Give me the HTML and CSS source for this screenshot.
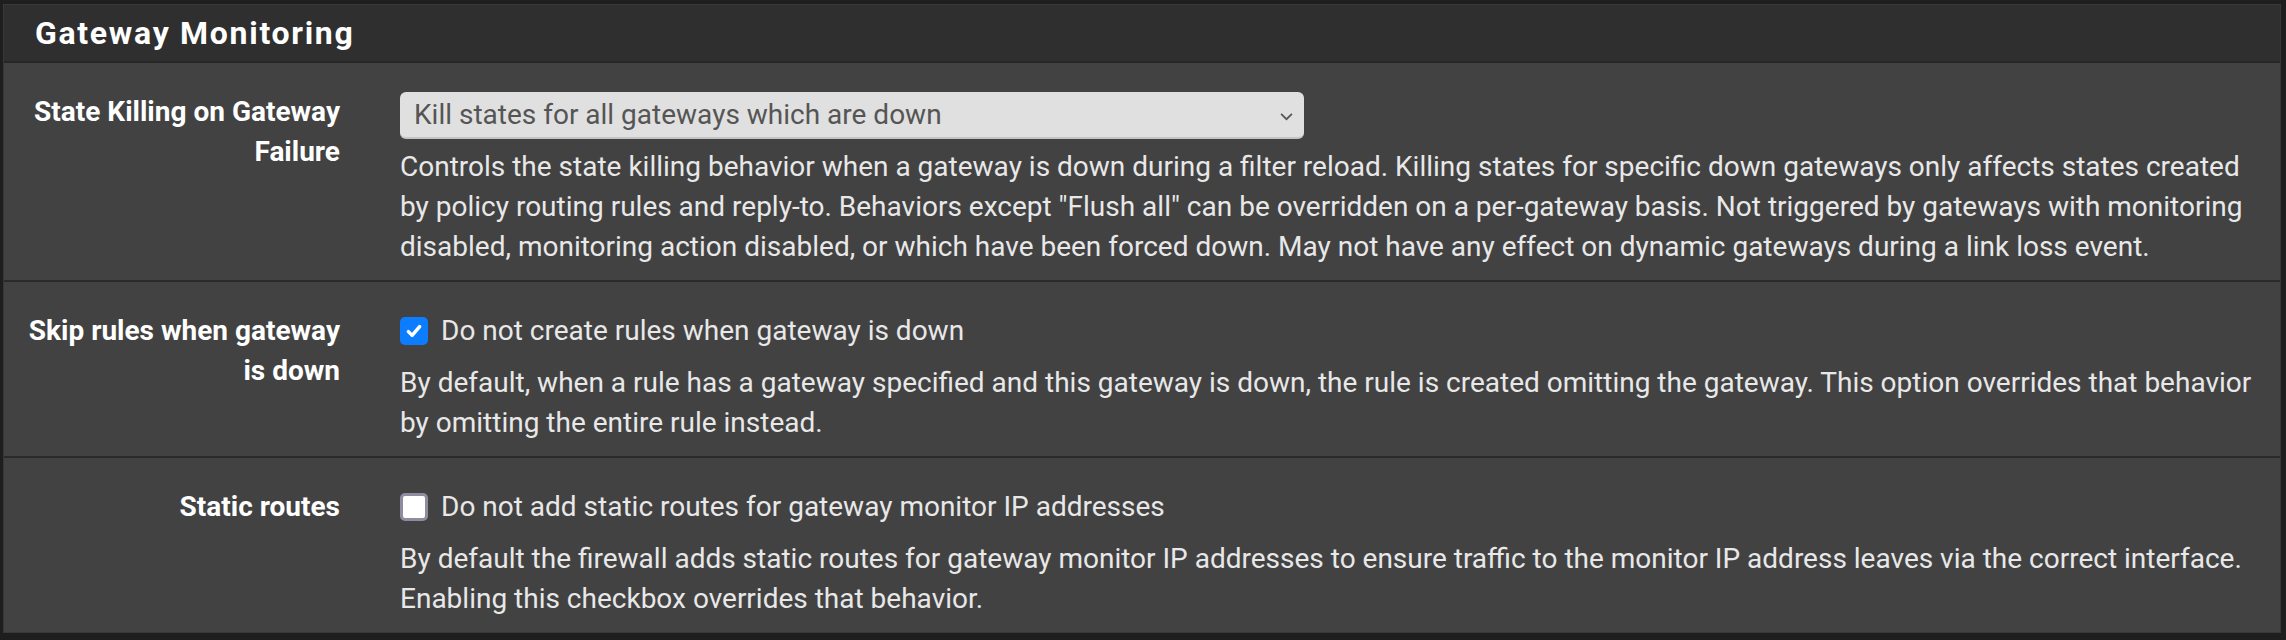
FILE: index.html
```html
<!DOCTYPE html>
<html lang="en">
<head>
  <meta charset="UTF-8">
  <title>Gateway Monitoring</title>
  <link rel="stylesheet" href="styles.css">
</head>
<body>
  <div class="panel">
    <div class="panel-heading">
      <h2 class="panel-title">Gateway Monitoring</h2>
    </div>
    <div class="panel-body">

      <div class="form-group">
        <label class="control-label" for="killStates">State Killing on Gateway Failure</label>
        <div class="control">
          <div class="select-wrap">
            <select id="killStates" class="form-select">
              <option>Kill states for all gateways which are down</option>
            </select>
            <svg class="chevron" viewBox="0 0 12 8" width="13" height="9"><path d="M1 1.5l5 5 5-5" fill="none" stroke="#555" stroke-width="1.6"/></svg>
          </div>
          <p class="help-block">Controls the state killing behavior when a gateway is down during a filter reload. Killing states for specific down gateways only affects states created by policy routing rules and reply-to. Behaviors except "Flush all" can be overridden on a per-gateway basis. Not triggered by gateways with monitoring disabled, monitoring action disabled, or which have been forced down. May not have any effect on dynamic gateways during a link loss event.</p>
        </div>
      </div>

      <div class="form-group">
        <label class="control-label" for="skipRules">Skip rules when gateway is down</label>
        <div class="control">
          <label class="checkbox">
            <span class="box checked">
              <svg viewBox="0 0 16 16" width="20" height="20"><path d="M3.5 8.5l3 3 6-7" fill="none" stroke="#fff" stroke-width="2.8" stroke-linecap="round" stroke-linejoin="round"/></svg>
            </span>
            Do not create rules when gateway is down
          </label>
          <p class="help-block">By default, when a rule has a gateway specified and this gateway is down, the rule is created omitting the gateway. This option overrides that behavior by omitting the entire rule instead.</p>
        </div>
      </div>

      <div class="form-group">
        <label class="control-label" for="staticRoutes">Static routes</label>
        <div class="control">
          <label class="checkbox">
            <span class="box"></span>
            Do not add static routes for gateway monitor IP addresses
          </label>
          <p class="help-block">By default the firewall adds static routes for gateway monitor IP addresses to ensure traffic to the monitor IP address leaves via the correct interface. Enabling this checkbox overrides that behavior.</p>
        </div>
      </div>

    </div>
  </div>
</body>
</html>
```

FILE: styles.css
```css
:root {
  --page-bg: #1e1e1e;
  --heading-bg: #2f2f2f;
  --body-bg: #424242;
  --rule: #2a2a2a;
  --label: #ffffff;
  --text: #e8e8e8;
  --accent: #0b7dfe;
}
body {
  margin: 0;
  padding: 4px 5px 6px 3px;
  background: var(--page-bg);
  font-family: Roboto, "Liberation Sans", sans-serif;
  color: var(--text);
}
.panel {
  background: var(--body-bg);
  border: 1px solid #383838;
}
.panel-heading {
  background: var(--heading-bg);
  height: 56px;
  display: flex;
  align-items: center;
  padding-left: 31px;
  border-bottom: 2px solid #262626;
}
.panel-title {
  margin: 0;
  font-size: 32px;
  font-weight: 700;
  letter-spacing: 1.7px;
  color: #fff;
}
.form-group {
  display: grid;
  grid-template-columns: 336px 1fr;
  column-gap: 60px;
  padding: 29px 22px 13px 0;
  border-bottom: 2px solid var(--rule);
  line-height: 40px;
}
.form-group:last-child {
  border-bottom: none;
}
.control-label {
  text-align: right;
  font-weight: 700;
  font-size: 28px;
  color: var(--label);
}
.control {
  font-size: 28px;
}
.select-wrap {
  position: relative;
  width: 904px;
}
.form-select {
  display: block;
  width: 100%;
  height: 47px;
  appearance: none;
  -webkit-appearance: none;
  background: #e0e0e0;
  border: none;
  border-bottom: 2px solid #c4c4c4;
  border-radius: 6px;
  padding: 0 14px;
  font-family: inherit;
  font-size: 28px;
  color: #555;
}
.chevron {
  position: absolute;
  right: 11px;
  top: 20px;
}
.help-block {
  margin: 12px 0 0;
}
.select-wrap + .help-block {
  margin-top: 8px;
}
.checkbox {
  display: flex;
  align-items: center;
  gap: 13px;
}
.box {
  width: 28px;
  height: 28px;
  box-sizing: border-box;
  border-radius: 5px;
  background: #fff;
  border: 3px solid #8e8c9e;
  display: flex;
  align-items: center;
  justify-content: center;
}
.box.checked {
  background: var(--accent);
  border: none;
}
```
